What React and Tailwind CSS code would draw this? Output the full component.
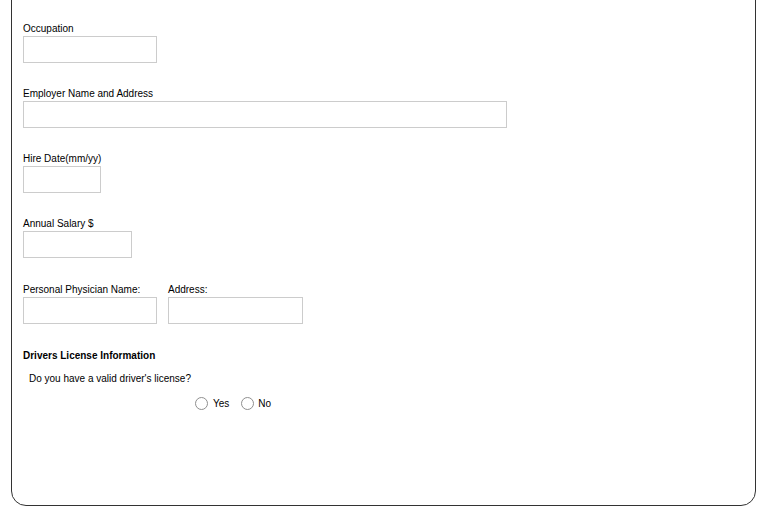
import React from "react";

function Field({ label, width, className = "" }) {
  return (
    <div className={className}>
      <div className="h-[13px] pt-[1px] leading-[12px]">{label}</div>
      <input
        type="text"
        className={`mt-[1px] block h-[27px] border border-[#cccccc] bg-white outline-none ${width}`}
      />
    </div>
  );
}

export default function App() {
  return (
    <div className="w-[767px] h-[512px] overflow-hidden bg-white text-black text-[10px] font-['Liberation_Sans',Arial,sans-serif]">
      <div className="ml-[11px] -mt-[20px] w-[745px] h-[526px] border border-[#333333] rounded-[15px] pl-[11px] pt-[41px]">
        <Field label="Occupation" width="w-[134px]" className="mb-[24px]" />
        <Field label="Employer Name and Address" width="w-[484px]" className="mb-[24px]" />
        <Field label="Hire Date(mm/yy)" width="w-[78px]" className="mb-[24px]" />
        <Field label="Annual Salary $" width="w-[109px]" className="mb-[25px]" />
        <div className="flex gap-[11px] mb-[25px]">
          <Field label="Personal Physician Name:" width="w-[134px]" />
          <Field label="Address:" width="w-[135px]" />
        </div>
        <div className="h-[13px] pt-[1px] leading-[12px] font-bold">Drivers License Information</div>
        <div className="mt-[11px] h-[12px] leading-[12px] pl-[6px]">Do you have a valid driver's license?</div>
        <div className="mt-[12px] flex items-center pl-[172px] h-[13px]">
          <label className="flex items-center">
            <input
              type="radio"
              name="dl"
              className="appearance-none m-0 w-[13px] h-[13px] rounded-full border border-[#8f8f8f] bg-white"
            />
            <span className="ml-[5px] leading-[12px]">Yes</span>
          </label>
          <label className="flex items-center ml-[12px]">
            <input
              type="radio"
              name="dl"
              className="appearance-none m-0 w-[13px] h-[13px] rounded-full border border-[#8f8f8f] bg-white"
            />
            <span className="ml-[4px] leading-[12px]">No</span>
          </label>
        </div>
      </div>
    </div>
  );
}
